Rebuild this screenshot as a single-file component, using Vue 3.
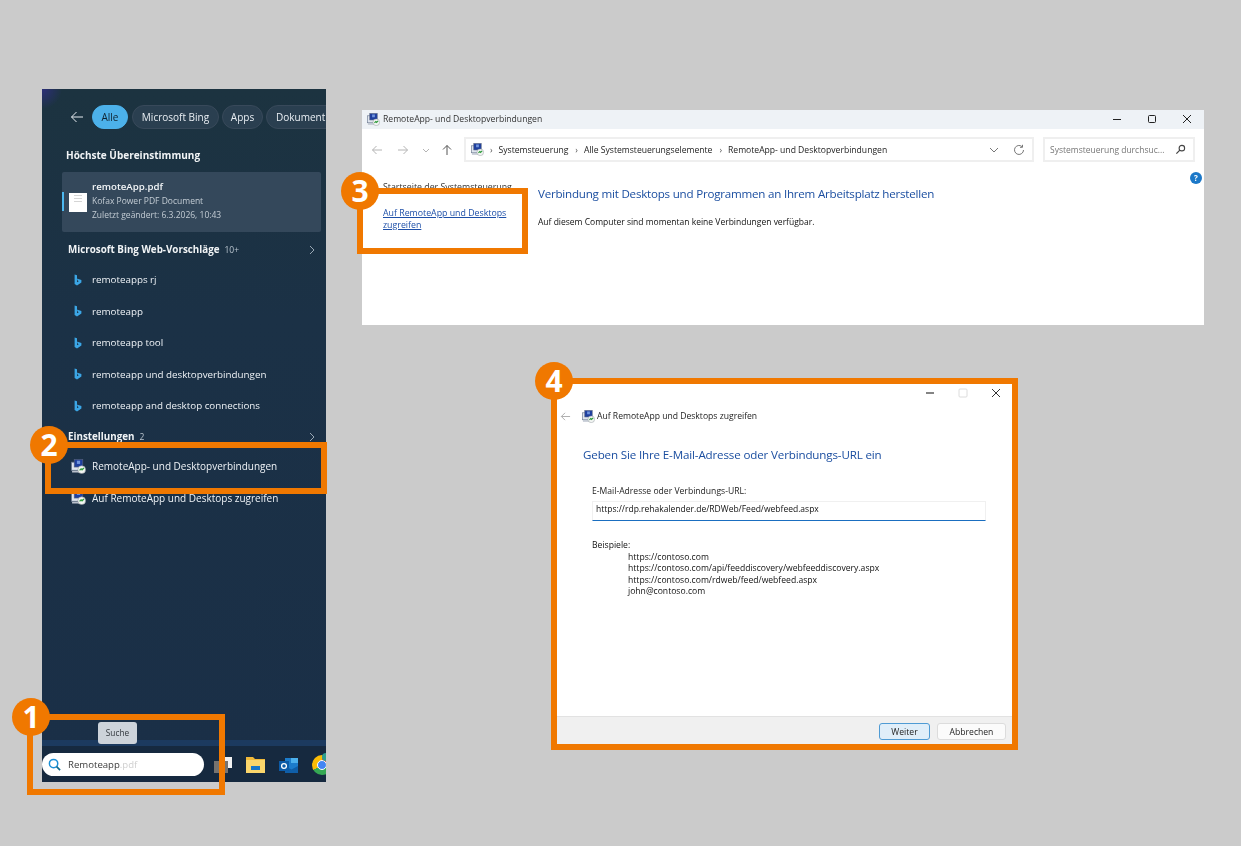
<script setup>
const tabs = [
  { label: 'Alle', width: 36, active: true },
  { label: 'Microsoft Bing', width: 87 },
  { label: 'Apps', width: 41 },
  { label: 'Dokument', width: 76 },
]
const suggestions = [
  'remoteapps rj',
  'remoteapp',
  'remoteapp tool',
  'remoteapp und desktopverbindungen',
  'remoteapp and desktop connections',
]
const settings = ['RemoteApp- und Desktopverbindungen', 'Auf RemoteApp und Desktops zugreifen']
const examples = [
  'https://contoso.com',
  'https://contoso.com/api/feeddiscovery/webfeeddiscovery.aspx',
  'https://contoso.com/rdweb/feed/webfeed.aspx',
  'john@contoso.com',
]
const marks = [
  { n: 1, cls: 'box-1' },
  { n: 2, cls: 'box-2' },
  { n: 3, cls: 'box-3' },
  { n: 4, cls: 'box-4' },
]
</script>

<template>
  <div class="page">
    <svg class="defs" width="0" height="0">
      <symbol id="cp" viewBox="0 0 14 14">
        <rect x="0.5" y="3" width="9" height="7.5" fill="#dfe5ee" stroke="#6d7a90" stroke-width=".7" />
        <rect x="3" y="0.5" width="8" height="7" fill="#1f3f9e" stroke="#55617c" stroke-width=".6" />
        <rect x="5.5" y="1.6" width="3" height="3" fill="#6f93dd" />
        <rect x="1" y="11" width="7" height="1.6" fill="#b9c0cc" />
        <circle cx="10" cy="10" r="3.6" fill="#f3f5f3" stroke="#8e969c" stroke-width=".5" />
        <path d="M8 10.6l1.4-1.4.9.9 1.7-1.7" fill="none" stroke="#2e9b3c" stroke-width="1.2" />
      </symbol>
      <symbol id="bing" viewBox="0 0 8 12">
        <path d="M.6.4l2.4.8v7l1.7-1-1.1-.6-.8-2.1 4.6 1.6v2.4L3 11.6.6 10z" fill="#3ba6e6" />
      </symbol>
    </svg>

    <section class="start">
      <div class="tabs">
        <svg class="back" viewBox="0 0 14 12"><path d="M13 6H1.5M6.5 1L1.5 6l5 5" fill="none" stroke="#e8edf2" stroke-width="1" /></svg>
        <span v-for="t in tabs" :key="t.label" class="tab" :class="{ on: t.active }" :style="{ width: t.width + 'px' }">{{ t.label }}</span>
      </div>
      <div class="best-title">Höchste Übereinstimmung</div>
      <div class="best">
        <i class="best-bar" />
        <div class="thumb"><i /><i /><i /></div>
        <div class="best-text">
          <div class="best-name">remoteApp.pdf</div>
          <div class="best-sub">Kofax Power PDF Document</div>
          <div class="best-sub">Zuletzt geändert: 6.3.2026, 10:43</div>
        </div>
      </div>

      <div class="group">
        <b>Microsoft Bing Web-Vorschläge</b><small>10+</small>
        <svg class="chev" viewBox="0 0 6 10"><path d="M1 1l4 4-4 4" fill="none" stroke="#9aa8b5" /></svg>
      </div>
      <div class="rows">
        <div v-for="s in suggestions" :key="s" class="row">
          <svg class="bing"><use href="#bing" /></svg>
          <span>{{ s }}</span>
        </div>
      </div>

      <div class="group group-2">
        <b>Einstellungen</b><small>2</small>
        <svg class="chev" viewBox="0 0 6 10"><path d="M1 1l4 4-4 4" fill="none" stroke="#9aa8b5" /></svg>
      </div>
      <div class="rows">
        <div v-for="s in settings" :key="s" class="row row-app">
          <svg class="app-icon"><use href="#cp" /></svg>
          <span>{{ s }}</span>
        </div>
      </div>

      <div class="tooltip">Suche</div>
      <div class="taskbar">
        <div class="pill">
          <svg class="lens" viewBox="0 0 14 14">
            <circle cx="6" cy="6" r="4.5" fill="none" stroke="#1b8fd6" stroke-width="1.6" />
            <path d="M9.3 9.3L13 13" stroke="#0f6a8c" stroke-width="1.8" />
          </svg>
          <span>Remoteapp</span><em>.pdf</em>
        </div>
        <div class="tray">
          <svg width="18" height="16" viewBox="0 0 18 16">
            <rect x="10" y="0" width="8" height="11" fill="#f1f1f1" />
            <rect x="0" y="4" width="14" height="12" fill="#77736f" />
          </svg>
          <svg width="19" height="16" viewBox="0 0 19 16">
            <path d="M0 0h7l2 2h10v14H0z" fill="#f0b93a" />
            <rect x="0" y="3" width="19" height="13" fill="#fbd66b" />
            <rect x="5" y="9" width="9" height="4" fill="#1877c9" />
          </svg>
          <svg width="19" height="17" viewBox="0 0 19 17">
            <rect x="6" y="1" width="13" height="15" fill="#1c7ccb" />
            <rect x="12" y="1" width="7" height="5" fill="#4cb0ec" />
            <path d="M6 9l6.5 3.5L19 9v7H6z" fill="#0f5ea8" />
            <rect x="0" y="4" width="10" height="10" fill="#0c5aa6" />
            <circle cx="5" cy="9" r="2.4" fill="none" stroke="#fff" stroke-width="1.3" />
          </svg>
          <span class="chrome"><i /></span>
        </div>
      </div>
    </section>

    <section class="cpanel">
      <header class="titlebar">
        <svg class="app-icon small"><use href="#cp" /></svg>
        <span>RemoteApp- und Desktopverbindungen</span>
        <div class="winctl">
          <svg viewBox="0 0 10 10"><path d="M1 5.5h8" stroke="#222" /></svg>
          <svg viewBox="0 0 10 10"><rect x="1.5" y="1.5" width="7" height="7" rx="1" fill="none" stroke="#222" /></svg>
          <svg viewBox="0 0 10 10"><path d="M1 1l8 8M9 1l-8 8" stroke="#222" /></svg>
        </div>
      </header>
      <div class="navbar">
        <div class="navbtns">
          <svg viewBox="0 0 12 12"><path d="M11 6H1.5M5.5 2L1.5 6l4 4" fill="none" stroke="#b4b4b4" /></svg>
          <svg viewBox="0 0 12 12"><path d="M1 6h9.5M6.5 2l4 4-4 4" fill="none" stroke="#b4b4b4" /></svg>
          <svg class="tiny" viewBox="0 0 8 8"><path d="M1 3l3 3 3-3" fill="none" stroke="#b4b4b4" /></svg>
          <svg viewBox="0 0 12 12"><path d="M6 11V1.5M2 5.5l4-4 4 4" fill="none" stroke="#555" /></svg>
        </div>
        <div class="address">
          <svg class="app-icon small"><use href="#cp" /></svg>
          <i class="crumb">›</i><span>Systemsteuerung</span>
          <i class="crumb">›</i><span>Alle Systemsteuerungselemente</span>
          <i class="crumb">›</i><span>RemoteApp- und Desktopverbindungen</span>
          <svg class="addr-down" viewBox="0 0 10 6"><path d="M1 1l4 4 4-4" fill="none" stroke="#777" /></svg>
          <svg class="addr-refresh" viewBox="0 0 12 12"><path d="M10.5 6A4.5 4.5 0 1 1 9 2.6M9.5 0.8v2.5H7" fill="none" stroke="#777" /></svg>
        </div>
        <div class="find">
          <span>Systemsteuerung durchsuc...</span>
          <svg viewBox="0 0 12 12"><circle cx="7.5" cy="4.5" r="3" fill="none" stroke="#444" stroke-width="1.2" /><path d="M5.3 6.7L1.5 10.5" stroke="#444" stroke-width="1.4" /></svg>
        </div>
      </div>
      <i class="help">?</i>
      <div class="cp-body">
        <aside class="cp-side">
          <a>Startseite der Systemsteuerung</a>
          <a class="cp-link">Auf RemoteApp und Desktops<br />zugreifen</a>
        </aside>
        <main class="cp-main">
          <h2>Verbindung mit Desktops und Programmen an Ihrem Arbeitsplatz herstellen</h2>
          <p>Auf diesem Computer sind momentan keine Verbindungen verfügbar.</p>
        </main>
      </div>
    </section>

    <section class="wizard">
      <div class="wiz-ctl">
        <svg viewBox="0 0 10 10"><path d="M1 5h8" stroke="#333" stroke-width="1.2" /></svg>
        <svg viewBox="0 0 10 10"><rect x="1" y="1" width="8" height="8" rx="1" fill="none" stroke="#dcdcdc" /></svg>
        <svg viewBox="0 0 10 10"><path d="M1 1l8 8M9 1l-8 8" stroke="#333" /></svg>
      </div>
      <div class="wiz-head">
        <svg class="wiz-back" viewBox="0 0 12 12"><path d="M11 6H1.5M5.5 2L1.5 6l4 4" fill="none" stroke="#a8a8a8" /></svg>
        <svg class="app-icon small"><use href="#cp" /></svg>
        <span>Auf RemoteApp und Desktops zugreifen</span>
      </div>
      <div class="wiz-body">
        <h2>Geben Sie Ihre E-Mail-Adresse oder Verbindungs-URL ein</h2>
        <div class="form">
          <label>E-Mail-Adresse oder Verbindungs-URL:</label>
          <div class="url">https://rdp.rehakalender.de/RDWeb/Feed/webfeed.aspx</div>
          <div class="ex-title">Beispiele:</div>
          <div v-for="e in examples" :key="e" class="ex">{{ e }}</div>
        </div>
      </div>
      <footer class="wiz-foot">
        <button class="primary">Weiter</button>
        <button>Abbrechen</button>
      </footer>
    </section>

    <div v-for="m in marks" :key="m.n" class="mark" :class="m.cls">
      <span>{{ m.n }}</span>
    </div>
  </div>
</template>

<style scoped>
.page {
  position: relative; width: 1241px; height: 846px; overflow: hidden; background: #cbcbcb;
  font-family: "Open Sans", "Noto Sans", sans-serif; color: #1a1a1a;
}
.defs { position: absolute; }
.app-icon { width: 15px; height: 15px; flex: none; }
.app-icon.small { width: 13px; height: 13px; }

/* start menu search */
.start {
  position: absolute; left: 42px; top: 89px; width: 284px; height: 693px; overflow: hidden;
  display: flex; flex-direction: column; color: #e9eef3; filter: blur(.3px);
  background:
    radial-gradient(circle at 0 0, #2c2f78 0, rgba(44,47,120,0) 20px),
    linear-gradient(180deg, #1c3340 0, #1b3146 230px, #1a2f47 100%);
}
.tabs { display: flex; align-items: center; padding: 16px 0 0 28px; height: 40px; box-sizing: border-box; flex: none; }
.back { width: 14px; height: 12px; margin-right: 8px; flex: none; }
.tab {
  flex: none; height: 24px; line-height: 23px; box-sizing: border-box; border-radius: 12px; text-align: center;
  font-size: 10px; background: #2a3f50; border: 1px solid #38495a; margin-right: 3px; white-space: nowrap;
}
.tab.on { background: #4cb1ea; border-color: #4cb1ea; color: #10222f; margin-right: 4px; }
.tab:last-child { text-align: left; padding-left: 9px; }
.best-title { font-size: 10px; font-weight: 700; line-height: 16px; margin: 18px 0 0 24px; color: #f1f4f6; }
.best {
  position: relative; margin: 9px 5px 0 20px; height: 60px; flex: none; background: #34485b; border-radius: 2px;
  display: flex; align-items: center; padding-left: 7px; box-sizing: border-box;
}
.best-bar { position: absolute; left: 0; top: 20px; width: 2px; height: 19px; background: #4cb8f0; }
.thumb { width: 18px; height: 19px; background: #fff; flex: none; display: flex; flex-direction: column; align-items: center; gap: 2px; padding-top: 2px; box-sizing: border-box; }
.thumb i { width: 8px; height: 1px; background: #d5d5d5; }
.best-text { margin: -3px 0 0 5px; }
.best-name { font-size: 9.7px; line-height: 15px; color: #f3f6f8; font-weight: 600; }
.best-sub { font-size: 8.5px; line-height: 14px; color: #c3ccd4; }
.group { position: relative; display: flex; align-items: baseline; height: 16px; line-height: 16px; margin: 10px 0 0 26px; font-size: 9.8px; flex: none; }
.group b { font-weight: 700; color: #f1f4f6; }
.group small { font-size: 8.5px; margin-left: 5px; color: #b8c3cd; }
.group-2 { margin-top: 7px; }
.chev { position: absolute; right: 11px; top: 3px; width: 6px; height: 10px; }
.rows { margin-top: 6px; flex: none; }
.row { height: 31.5px; display: flex; align-items: center; padding-left: 32px; font-size: 9.8px; color: #eef2f6; font-weight: 500; }
.row span { margin-left: 10px; }
.bing { width: 8px; height: 12px; flex: none; }
.row-app { padding-left: 29px; font-weight: 400; font-size: 10px; }
.row-app span { margin-left: 6px; }
.tooltip {
  position: absolute; left: 56px; top: 633px; width: 39px; height: 22px; line-height: 22px; text-align: center;
  background: #cdd3da; color: #30363c; font-size: 8.3px; border-radius: 3px; z-index: 1;
}
.taskbar { margin-top: auto; height: 42px; flex: none; background: #16293f; border-top: 6px solid #1c3a5f; box-sizing: border-box; display: flex; align-items: center; }
.pill {
  width: 162px; height: 23px; background: #fff; border-radius: 12px; display: flex; align-items: center;
  box-sizing: border-box; padding-left: 6px; font-size: 9.6px; color: #3c3c3c; flex: none;
}
.lens { width: 13px; height: 13px; margin-right: 7px; }
.pill em { font-style: normal; color: #cfcfcf; }
.tray { display: flex; align-items: center; gap: 14px; margin: 2px 0 0 10px; flex: none; }
.chrome {
  position: relative; width: 20px; height: 20px; border-radius: 50%; flex: none;
  background: conic-gradient(#e8453c 0 120deg, #35a853 120deg 240deg, #fbbc05 240deg 360deg);
}
.chrome::before { content: ""; position: absolute; inset: 5px; border-radius: 50%; background: #4285f4; border: 1.5px solid #fff; box-sizing: border-box; }
.chrome i { position: absolute; left: 10px; top: -2px; width: 8px; height: 8px; border-radius: 50%; background: #2b9f8e; }

/* control panel window */
.cpanel { position: absolute; left: 362px; top: 110px; width: 842px; height: 215px; background: #fff; display: flex; flex-direction: column; filter: blur(.3px); }
.titlebar { height: 19px; background: #eef2f6; display: flex; align-items: center; padding: 0 0 1px 5px; box-sizing: border-box; font-size: 8.6px; color: #333; flex: none; }
.titlebar span { margin-left: 3px; }
.winctl { margin-left: auto; display: flex; gap: 25px; padding-right: 12px; }
.winctl svg { width: 10px; height: 10px; }
.navbar { display: flex; align-items: center; height: 25px; margin-top: 8px; flex: none; }
.navbtns { width: 102px; display: flex; align-items: center; padding-left: 9px; gap: 14px; box-sizing: border-box; flex: none; }
.navbtns svg { width: 12px; height: 12px; flex: none; }
.navbtns svg.tiny { width: 8px; height: 8px; margin: 0 -1px; }
.navbtns svg:last-child { margin-left: -2px; }
.address {
  position: relative; width: 570px; height: 25px; border: 2px solid #efefef; box-sizing: border-box; display: flex; align-items: center;
  padding-left: 5px; font-size: 8.6px; color: #222; flex: none;
}
.crumb { font-style: normal; margin: 0 6px 0 7px; color: #555; }
.crumb:first-of-type { margin-left: 6px; }
.addr-down { position: absolute; right: 33px; top: 8px; width: 10px; height: 6px; }
.addr-refresh { position: absolute; right: 7px; top: 5px; width: 12px; height: 12px; }
.find {
  width: 152px; height: 25px; margin-left: 9px; border: 2px solid #efefef; box-sizing: border-box; display: flex; align-items: center;
  justify-content: space-between; padding: 0 7px 0 5px; font-size: 8.5px; color: #777; flex: none;
}
.find svg { width: 11px; height: 11px; }
.help {
  position: absolute; right: 2px; top: 62px; width: 12px; height: 12px; border-radius: 50%; background: #1b78c8; color: #fff;
  font-style: normal; font-weight: 700; font-size: 8px; line-height: 12px; text-align: center;
}
.cp-body { display: flex; }
.cp-side { width: 176px; padding: 19px 0 0 21px; box-sizing: border-box; font-size: 8.8px; line-height: 12px; color: #333; flex: none; }
.cp-side a { display: block; }
.cp-link { margin-top: 14px; color: #1d4fa8; text-decoration: underline; }
.cp-main h2 { margin: 24px 0 0; font-size: 11.6px; letter-spacing: -.22px; line-height: 16px; font-weight: 400; color: #1b4ea0; }
.cp-main p { margin: 13px 0 0; font-size: 8.5px; line-height: 13px; color: #111; }

/* wizard window */
.wizard { position: absolute; left: 557px; top: 384px; width: 455px; height: 360px; background: #fff; display: flex; flex-direction: column; filter: blur(.3px); }
.wiz-ctl { position: absolute; right: 11px; top: 4px; display: flex; gap: 23px; }
.wiz-ctl svg { width: 10px; height: 10px; }
.wiz-head { display: flex; align-items: center; margin-top: 25px; height: 14px; font-size: 8.6px; padding-left: 3px; color: #222; flex: none; }
.wiz-back { width: 11px; height: 11px; margin-right: 11px; }
.wiz-head span { margin-left: 2px; }
.wiz-body { flex: 1; padding-left: 26px; }
.wiz-body h2 { margin: 24px 0 0; font-size: 11.6px; letter-spacing: -.15px; line-height: 16px; font-weight: 400; color: #1b4ea0; }
.form { margin: 23px 0 0 9px; font-size: 8.6px; line-height: 11.4px; color: #111; }
.form label { display: block; color: #222; }
.url {
  width: 394px; height: 20px; margin-top: 4px; box-sizing: border-box; border: 1px solid #f0f0f0; border-bottom: 1.5px solid #1a6ec0;
  padding-left: 3px; line-height: 14px; font-size: 8.5px; color: #111;
}
.ex-title { margin-top: 19px; }
.ex { padding-left: 36px; }
.wiz-foot {
  height: 28px; background: #f0f0f0; border-top: 1px solid #e2e2e2; display: flex; justify-content: flex-end; align-items: center;
  gap: 7px; padding: 2px 6px 0 0; box-sizing: border-box; flex: none;
}
.wiz-foot button {
  width: 69px; height: 17px; padding: 0; border-radius: 3px; background: #fbfbfb; border: 1px solid #dcdcdc;
  font: 8.6px "Open Sans", sans-serif; color: #222;
}
.wiz-foot .primary { width: 51px; background: #e0eef9; border-color: #4f9bd4; }

/* orange callouts */
.mark { position: absolute; border: 6px solid #f07800; box-sizing: border-box; z-index: 2; }
.mark span {
  position: absolute; width: 38px; height: 38px; border-radius: 50%; background: #f07800; color: #fff;
  font-weight: 700; font-size: 30px; line-height: 38px; text-align: center;
}
.box-1 { left: 27px; top: 714px; width: 198px; height: 81px; }
.box-1 span { left: -21px; top: -22px; }
.box-2 { left: 45px; top: 442px; width: 282px; height: 52px; }
.box-2 span { left: -21px; top: -22px; }
.box-3 { left: 357px; top: 188px; width: 171px; height: 66px; }
.box-3 span { left: -22px; top: -22px; }
.box-4 { left: 551px; top: 378px; width: 467px; height: 372px; }
.box-4 span { left: -22px; top: -22px; }
</style>
